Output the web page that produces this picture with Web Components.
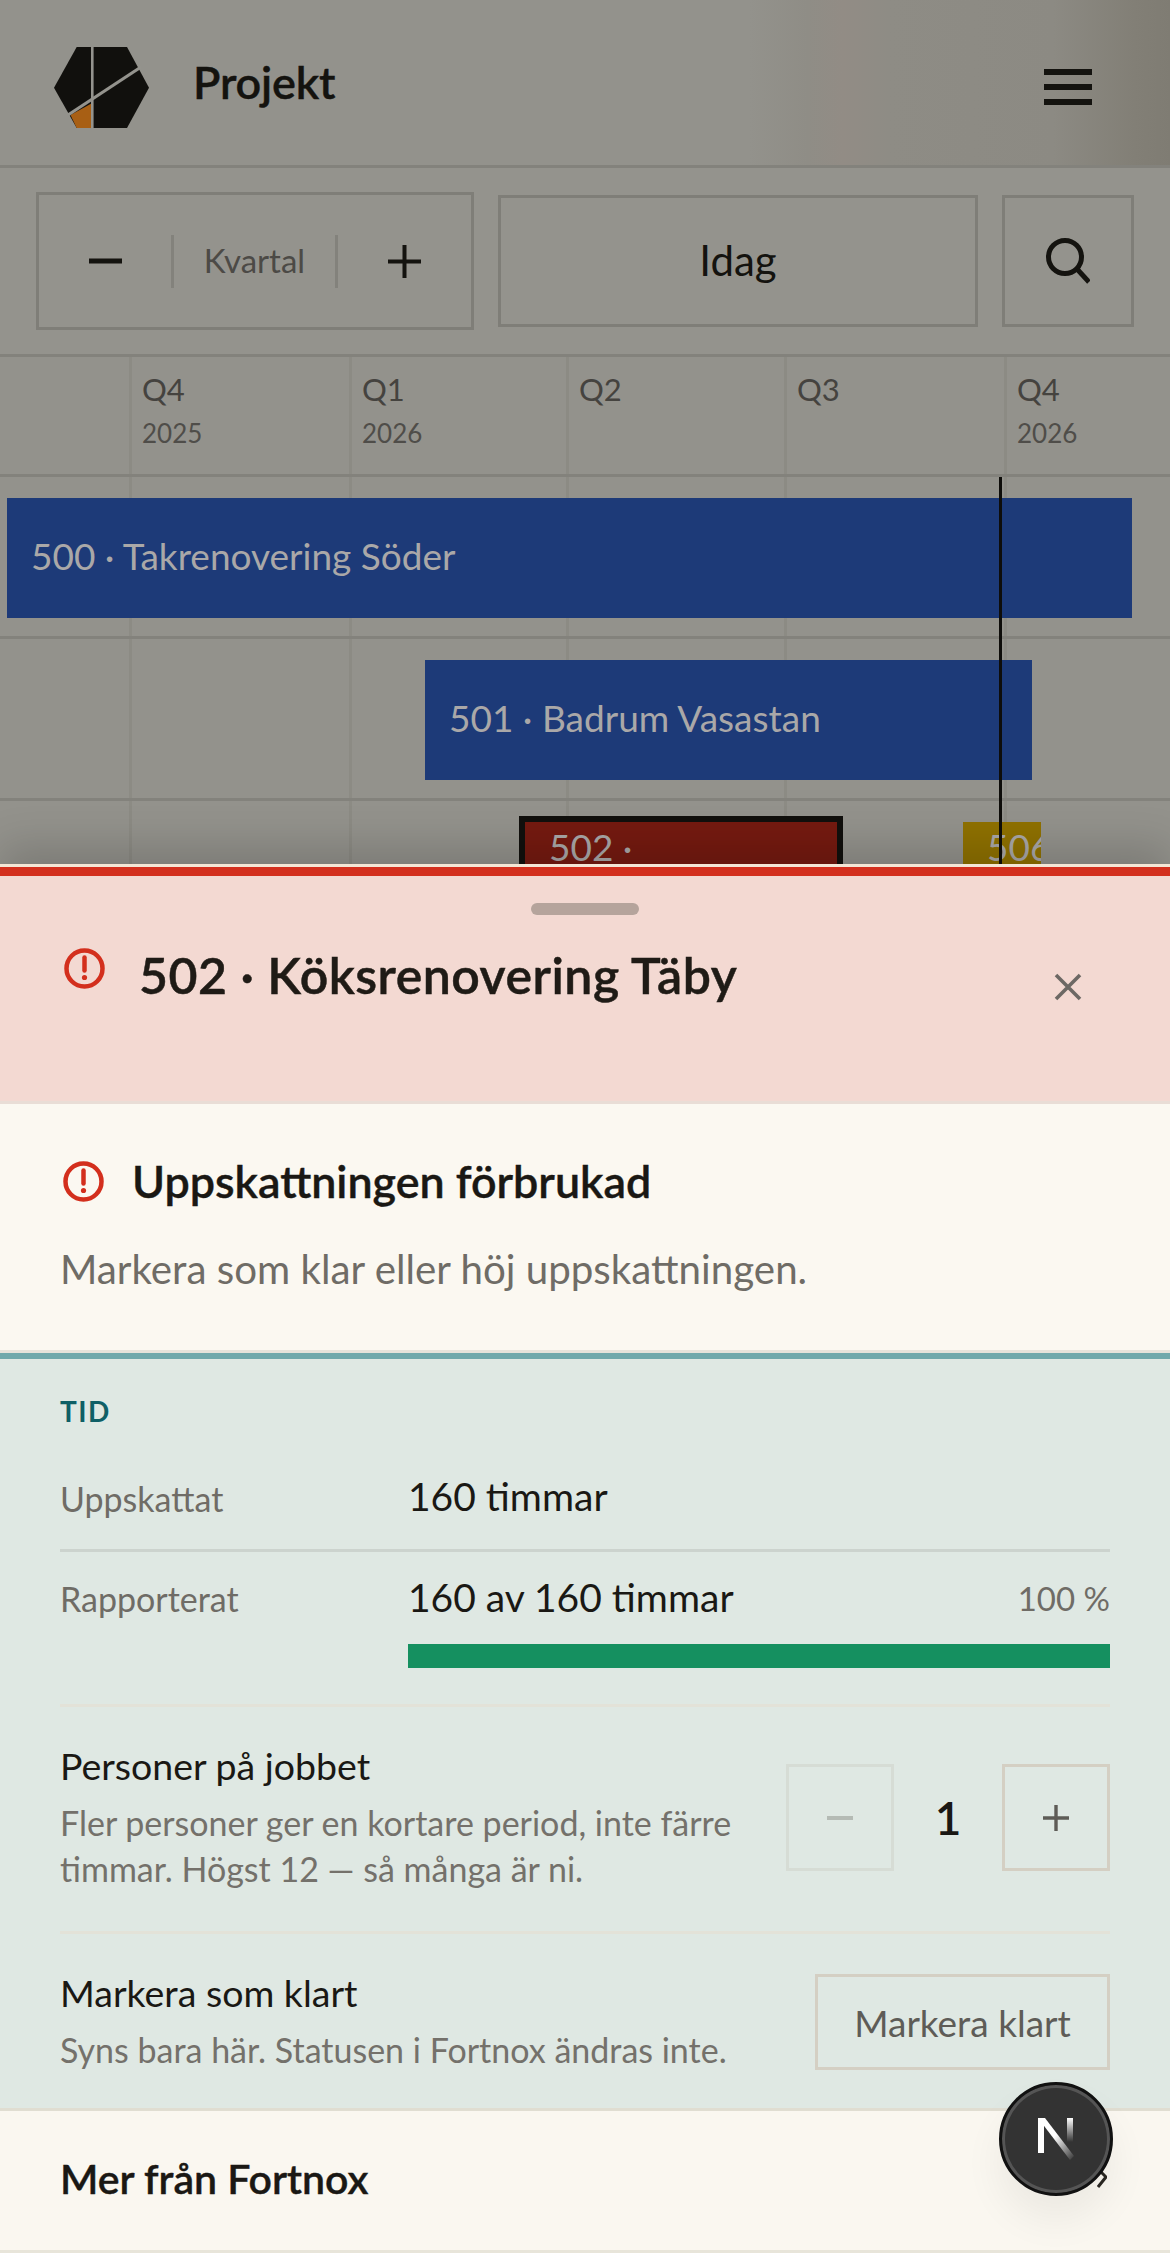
<!DOCTYPE html>
<html lang="sv">
<head>
<meta charset="utf-8">
<title>Projekt</title>
<style>
    html, body { margin: 0; padding: 0; }
    body { font-family: Lato, "Open Sans", sans-serif; color: #1a1814; background: #93928c; }
</style>
</head>
<body>
<app-shell>
    <gantt-header>Projekt</gantt-header>
    <gantt-toolbar></gantt-toolbar>
    <gantt-timeline>
        <gantt-row>
            <project-bar style="--from:7px;--len:1125px">500 · Takrenovering Söder</project-bar>
        </gantt-row>
        <gantt-row>
            <project-bar style="--from:425px;--len:607px">501 · Badrum Vasastan</project-bar>
        </gantt-row>
        <gantt-row>
            <project-bar selected style="--from:525px;--len:312px;--bar:#751a10">502 ·</project-bar>
            <project-bar compact style="--from:126px;--len:78px;--bar:#8f7100">506</project-bar>
        </gantt-row>
    </gantt-timeline>
    <detail-sheet>
        <span slot="title">502 · Köksrenovering Täby</span>
        <alert-block slot="alert">
            <span slot="title">Uppskattningen förbrukad</span>
            Markera som klar eller höj uppskattningen.
        </alert-block>
        <time-section>
            <info-row label="Uppskattat">160 timmar</info-row>
            <info-row label="Rapporterat" note="100 %" progress last>160 av 160 timmar</info-row>
        </time-section>
        <action-row>
            <span slot="title">Personer på jobbet</span>
            <span slot="desc">Fler personer ger en kortare period, inte färre timmar. Högst 12 — så många är ni.</span>
            <count-stepper slot="control" value="1"></count-stepper>
        </action-row>
        <action-row last>
            <span slot="title">Markera som klart</span>
            <span slot="desc">Syns bara här. Statusen i Fortnox ändras inte.</span>
            <outline-button slot="control">Markera klart</outline-button>
        </action-row>
        <span slot="footer">Mer från Fortnox</span>
    </detail-sheet>
    <dev-badge></dev-badge>
</app-shell>

<script>
// Base class, every part sets its markup in a static getter
class ShadowPart extends HTMLElement {
    constructor() {
        super();
        this.attachShadow({ mode: 'open' });
        this.shadowRoot.innerHTML = this.constructor.markup;
    }
}

const ALERT_ICON = `
    <svg viewBox="0 0 41 41" width="41" height="41" fill="none">
        <circle cx="20.5" cy="20.5" r="18" stroke="#d32f1d" stroke-width="4.5"/>
        <path d="M20.5 9.5v13" stroke="#d32f1d" stroke-width="4.5" stroke-linecap="round"/>
        <circle cx="20.5" cy="29.5" r="2.6" fill="#d32f1d"/>
    </svg>`;

class AppShell extends ShadowPart {
    static get markup() {
        return `
            <style>
                :host {
                    display: flex;
                    flex-direction: column;
                    position: relative;
                    width: 1170px;
                    height: 2253px;
                    overflow: hidden;
                }
            </style>
            <slot></slot>
        `;
    }
}

class GanttHeader extends ShadowPart {
    static get markup() {
        return `
            <style>
                :host {
                    display: flex;
                    flex: none;
                    align-items: center;
                    box-sizing: border-box;
                    height: 168px;
                    padding: 9px 78px 0 54px;
                    border-bottom: 3px solid #83827c;
                    background: linear-gradient(90deg, #93928c 0 64%, #8f8d86 69%, #928c85 72%, #8e8c85 76%, #8c8a83 90%, #827f76 97%, #7f7c73 100%);
                }
                .name {
                    margin: -10px 0 0 44px;
                    flex: 1;
                    font-size: 45px;
                    font-weight: 600;
                    -webkit-text-stroke: 0.4px #14130f;
                    color: #14130f;
                    letter-spacing: -0.2px;
                }
                .menu { display: flex; flex-direction: column; gap: 9px; }
                .menu i { display: block; width: 48px; height: 6px; background: #14130f; }
            </style>
            <svg viewBox="0 0 95 81" width="95" height="81">
                <polygon points="22.7,0 73,0 95,40.7 73,81 22.7,81 0,40.7" fill="#11100d"/>
                <polygon points="16.5,68 38.3,56 38.3,81 22.7,81" fill="#a85f14"/>
                <path d="M38.3 0v81" stroke="#94938d" stroke-width="2.6"/>
                <path d="M87 20 14 68" stroke="#94938d" stroke-width="3.2"/>
            </svg>
            <div class="name"><slot></slot></div>
            <div class="menu"><i></i><i></i><i></i></div>
        `;
    }
}

class GanttToolbar extends ShadowPart {
    static get markup() {
        return `
            <style>
                :host {
                    display: flex;
                    flex: none;
                    align-items: center;
                    gap: 24px;
                    box-sizing: border-box;
                    height: 189px;
                    padding: 0 36px;
                    border-bottom: 3px solid #83827c;
                    background: #94938d;
                    color: #14130f;
                }
                .box { box-sizing: border-box; height: 132px; border: 3px solid #7f7e78; }
                .zoom {
                    width: 438px;
                    height: 138px;
                    display: grid;
                    grid-template-columns: 132px 167px 1fr;
                    align-items: center;
                }
                .zoom > div { display: flex; justify-content: center; align-items: center; height: 50px; }
                .label {
                    padding-bottom: 3px;
                    border-left: 3px solid #83827c;
                    border-right: 3px solid #83827c;
                    font-size: 33px;
                    color: #4c4a46;
                }
                .today {
                    flex: 1;
                    display: flex;
                    justify-content: center;
                    align-items: center;
                    padding-bottom: 3px;
                    font-size: 42px;
                }
                .search { width: 132px; display: flex; justify-content: center; align-items: center; }
            </style>
            <div class="box zoom">
                <div><svg width="33" height="33" viewBox="0 0 33 33"><path d="M0 16h33" stroke="#14130f" stroke-width="5"/></svg></div>
                <div class="label">Kvartal</div>
                <div><svg width="33" height="33" viewBox="0 0 33 33"><path d="M0 16.5h33M16.5 0v33" stroke="#14130f" stroke-width="4"/></svg></div>
            </div>
            <div class="box today">Idag</div>
            <div class="box search">
                <svg width="44" height="46" viewBox="0 0 44 46" fill="none" stroke="#14130f" stroke-width="5">
                    <circle cx="19" cy="19" r="16.5"/>
                    <path d="M31 31l12 13"/>
                </svg>
            </div>
        `;
    }
}

// Column lines are shared by the head and the rows
const COLUMN_LINES = [129, 349, 566, 784, 1004]
    .map(x => `linear-gradient(#8c8b84, #8c8b84) ${x}px 0 / 3px 100% no-repeat`)
    .join(', ');

class GanttTimeline extends ShadowPart {
    static get markup() {
        const quarters = [['Q4', '2025'], ['Q1', '2026'], ['Q2', ''], ['Q3', ''], ['Q4', '2026']];
        const cells = quarters.map(([q, y]) => `<div><b>${q}</b><span>${y}</span></div>`).join('');
        return `
            <style>
                :host {
                    display: block;
                    position: relative;
                    flex: none;
                    height: 507px;
                    overflow: hidden;
                    background: #93928c;
                }
                .head {
                    display: grid;
                    grid-template-columns: 129px 220px 217px 218px 220px 1fr;
                    box-sizing: border-box;
                    height: 120px;
                    border-bottom: 3px solid #83827c;
                    background: ${COLUMN_LINES};
                }
                .head div:first-of-type { grid-column: 2; }
                .head div { padding: 14px 0 0 13px; color: #45433f; }
                .head b { display: block; font-weight: 400; font-size: 31px; line-height: 36px; }
                .head span { display: block; font-size: 26px; line-height: 36px; margin-top: 8px; color: #4f4d49; }
                .now { position: absolute; left: 999px; top: 120px; bottom: 0; width: 3px; background: #0e0d0a; z-index: 2; }
            </style>
            <div class="head">${cells}</div>
            <slot></slot>
            <div class="now"></div>
        `;
    }
}

class GanttRow extends ShadowPart {
    static get markup() {
        return `
            <style>
                :host {
                    display: flex;
                    align-items: flex-start;
                    box-sizing: border-box;
                    height: 162px;
                    padding-top: 21px;
                    border-bottom: 3px solid #83827c;
                    background: ${COLUMN_LINES};
                }
            </style>
            <slot></slot>
        `;
    }
}

class ProjectBar extends ShadowPart {
    static get markup() {
        return `
            <style>
                :host {
                    display: block;
                    flex: none;
                    box-sizing: border-box;
                    margin-left: var(--from);
                    width: var(--len);
                    height: 120px;
                    padding: 0 0 0 24px;
                    overflow: hidden;
                    white-space: nowrap;
                    background: var(--bar, #1d3a78);
                    color: #aaa8a8;
                    font-size: 37px;
                    line-height: 116px;
                }
                :host([selected]), :host([compact]) { line-height: 50px; }
                :host([selected]) { outline: 6px solid #11100d; }
            </style>
            <slot></slot>
        `;
    }
}

class DetailSheet extends ShadowPart {
    static get markup() {
        return `
            <style>
                :host {
                    display: flex;
                    flex-direction: column;
                    flex: 1;
                    position: relative;
                    z-index: 3;
                    background: #dfe8e3;
                    border-top: 3px solid #f4e6d6;
                    box-shadow: 0 -18px 40px rgba(0, 0, 0, 0.16);
                }
                .top {
                    box-sizing: border-box;
                    height: 237px;
                    border-top: 9px solid #d32f1d;
                    border-bottom: 3px solid #e9ddd6;
                    background: #f3d9d2;
                    position: relative;
                }
                .handle { width: 108px; height: 12px; margin: 27px auto 0; border-radius: 6px; background: #b5a49c; }
                .title {
                    display: flex;
                    align-items: flex-start;
                    padding: 33px 64px 0 64px;
                    gap: 34px;
                }
                .title h1 {
                    margin: -4px 0 0;
                    flex: 1;
                    font-size: 50px;
                    line-height: 62px;
                    font-weight: 600;
                    -webkit-text-stroke: 0.5px #1f1b16;
                    letter-spacing: 0.5px;
                    color: #1f1b16;
                }
                .close { margin: 25px 24px 0 0; }
                .footer {
                    margin-top: auto;
                    display: flex;
                    justify-content: space-between;
                    align-items: center;
                    flex: none;
                    box-sizing: border-box;
                    height: 145px;
                    padding: 0 63px 5px 60px;
                    border-top: 3px solid #e0ddd1;
                    border-bottom: 3px solid #e8e5da;
                    background: #faf7f0;
                    font-size: 41px;
                    font-weight: 600;
                    -webkit-text-stroke: 0.4px #1a1814;
                    color: #1a1814;
                }
            </style>
            <div class="top">
                <div class="handle"></div>
                <div class="title">
                    ${ALERT_ICON}
                    <h1><slot name="title"></slot></h1>
                    <svg class="close" width="28" height="28" viewBox="0 0 28 28"><path d="M2 2l24 24M26 2 2 26" stroke="#6c6864" stroke-width="3.6"/></svg>
                </div>
            </div>
            <slot name="alert"></slot>
            <slot></slot>
            <div class="footer">
                <slot name="footer"></slot>
                <svg width="10" height="20" viewBox="0 0 10 20" fill="none"><path d="M1 1l8 8-8 10" stroke="#2b2823" stroke-width="3"/></svg>
            </div>
        `;
    }
}

class AlertBlock extends ShadowPart {
    static get markup() {
        return `
            <style>
                :host {
                    display: block;
                    box-sizing: border-box;
                    height: 249px;
                    padding: 55px 60px 0;
                    border-bottom: 3px solid #e5e2da;
                    background: #fbf8f1;
                }
                .head { display: flex; align-items: center; gap: 28px; padding-left: 3px; }
                h2 {
                    margin: 0;
                    font-size: 44.8px;
                    line-height: 44px;
                    font-weight: 600;
                    -webkit-text-stroke: 0.4px #1a1814;
                    color: #1a1814;
                }
                p { margin: 42px 0 0; font-size: 40.3px; line-height: 48px; color: #6f6c66; }
            </style>
            <div class="head">${ALERT_ICON}<h2><slot name="title"></slot></h2></div>
            <p><slot></slot></p>
        `;
    }
}

class TimeSection extends ShadowPart {
    static get markup() {
        return `
            <style>
                :host {
                    display: block;
                    padding: 0 60px;
                    border-top: 6px solid #6fa8ab;
                }
                h3 {
                    margin: 0;
                    padding-top: 35px;
                    font-size: 28px;
                    line-height: 34px;
                    font-weight: 700;
                    letter-spacing: 1.5px;
                    color: #0f5f66;
                }
            </style>
            <h3>TID</h3>
            <slot></slot>
        `;
    }
}

class InfoRow extends ShadowPart {
    static get markup() {
        return `
            <style>
                :host {
                    display: grid;
                    grid-template-columns: 348px 1fr;
                    padding: 22px 0 27px;
                    border-bottom: 3px solid #ccd3ce;
                }
                :host(:first-of-type) { padding-top: 45px; }
                :host([last]) { border-bottom: 0; padding-bottom: 36px; }
                .label { font-size: 34px; line-height: 46px; color: #6f6c66; padding-top: 3px; }
                :host([last]) .label { padding-top: 2px; }
                .main { display: flex; justify-content: space-between; font-size: 39px; line-height: 46px; color: #1a1814; }
                .note { font-size: 33px; color: #6f6c66; padding-top: 1px; }
                .bar { display: none; height: 24px; margin-top: 23px; background: #159060; }
                :host([progress]) .bar { display: block; }
            </style>
            <div class="label"></div>
            <div>
                <div class="main"><span><slot></slot></span><span class="note"></span></div>
                <div class="bar"></div>
            </div>
        `;
    }

    connectedCallback() {
        this.shadowRoot.querySelector('.label').textContent = this.getAttribute('label');
        this.shadowRoot.querySelector('.note').textContent = this.getAttribute('note') || '';
    }
}

class ActionRow extends ShadowPart {
    static get markup() {
        return `
            <style>
                :host {
                    display: flex;
                    justify-content: space-between;
                    align-items: center;
                    gap: 40px;
                    margin: 0 60px;
                    padding: 36px 0 39px;
                    border-top: 3px solid #e3e2d8;
                }
                :host([last]) { padding: 36px 0 33px; align-items: flex-start; }
                .text { flex: 1; min-width: 0; }
                .title { font-size: 37.5px; line-height: 46px; color: #1a1814; }
                .desc { margin-top: 11px; font-size: 34px; line-height: 46px; color: #74716b; }
            </style>
            <div class="text">
                <div class="title"><slot name="title"></slot></div>
                <div class="desc"><slot name="desc"></slot></div>
            </div>
            <slot name="control"></slot>
        `;
    }
}

class CountStepper extends ShadowPart {
    static get markup() {
        return `
            <style>
                :host { display: flex; align-items: center; flex: none; width: 324px; }
                div {
                    box-sizing: border-box;
                    width: 108px;
                    height: 107px;
                    display: flex;
                    justify-content: center;
                    align-items: center;
                }
                .step { border: 3px solid #d4cfc3; }
                .off { border-color: #d6dcd5; }
                .value { font-size: 46px; font-weight: 600; color: #1a1814; }
            </style>
            <div class="step off"><svg width="26" height="26" viewBox="0 0 26 26"><path d="M0 13h26" stroke="#b5bbb5" stroke-width="4"/></svg></div>
            <div class="value"></div>
            <div class="step"><svg width="26" height="26" viewBox="0 0 26 26"><path d="M0 13h26M13 0v26" stroke="#5e5c57" stroke-width="3.4"/></svg></div>
        `;
    }

    connectedCallback() {
        this.shadowRoot.querySelector('.value').textContent = this.getAttribute('value');
    }
}

class OutlineButton extends ShadowPart {
    static get markup() {
        return `
            <style>
                :host {
                    display: flex;
                    justify-content: center;
                    align-items: center;
                    flex: none;
                    box-sizing: border-box;
                    width: 295px;
                    height: 96px;
                    margin-top: 4px;
                    border: 3px solid #d4cfc3;
                    font-size: 37px;
                    color: #5e5c57;
                }
            </style>
            <slot></slot>
        `;
    }
}

class DevBadge extends ShadowPart {
    static get markup() {
        return `
            <style>
                :host {
                    position: absolute;
                    left: 999px;
                    top: 2082px;
                    z-index: 5;
                    box-sizing: border-box;
                    width: 114px;
                    height: 114px;
                    border-radius: 50%;
                    background: #333;
                    border: 3px solid #111;
                    box-shadow: inset 0 0 0 3px #555, 0 24px 40px rgba(0, 0, 0, 0.06);
                    display: flex;
                    justify-content: center;
                    align-items: center;
                }
            </style>
            <svg width="36" height="42" viewBox="0 0 36 42">
                <defs>
                    <linearGradient id="fadeA" x1="0.45" y1="0.45" x2="1" y2="1">
                        <stop offset="0" stop-color="#fff"/><stop offset="1" stop-color="#fff" stop-opacity="0"/>
                    </linearGradient>
                    <linearGradient id="fadeB" x1="0" y1="0" x2="0" y2="1">
                        <stop offset="0" stop-color="#fff"/><stop offset="1" stop-color="#fff" stop-opacity="0"/>
                    </linearGradient>
                </defs>
                <path d="M0 0h6v35H0z" fill="#fff"/>
                <path d="M0 0h7l29 38-4 4z" fill="url(#fadeA)"/>
                <path d="M29 0h6v24h-6z" fill="url(#fadeB)"/>
            </svg>
        `;
    }
}

customElements.define('app-shell', AppShell);
customElements.define('gantt-header', GanttHeader);
customElements.define('gantt-toolbar', GanttToolbar);
customElements.define('gantt-timeline', GanttTimeline);
customElements.define('gantt-row', GanttRow);
customElements.define('project-bar', ProjectBar);
customElements.define('detail-sheet', DetailSheet);
customElements.define('alert-block', AlertBlock);
customElements.define('time-section', TimeSection);
customElements.define('info-row', InfoRow);
customElements.define('action-row', ActionRow);
customElements.define('count-stepper', CountStepper);
customElements.define('outline-button', OutlineButton);
customElements.define('dev-badge', DevBadge);
</script>
</body>
</html>
